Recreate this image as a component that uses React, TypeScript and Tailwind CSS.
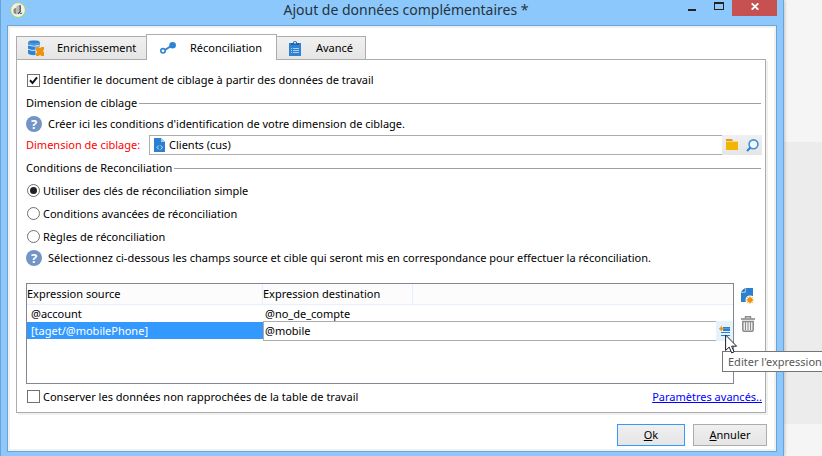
import { useState, type ReactNode } from "react";

function EnrichIcon() {
  return (
    <svg width="16" height="16" viewBox="0 0 16 16" aria-hidden="true">
      <path d="M0 2.200v11C1.500 15 5 15.400 8 15V8h4V2.200z" fill="#2f83d2" />
      <path d="M0 5q6 2.500 12 0M0 9.200q4 2 8 1" stroke="#e4eef8" strokeWidth=".9" fill="none" />
      <ellipse cx="6" cy="2.200" rx="6" ry="2" fill="#2f83d2" stroke="#a9cdee" strokeWidth=".5" />
      <path d="M7.500 6.500h9v9.500h-9z" fill="#ececec" />
      <path d="M8 7h2.500l1.500 1 1.500-1H16v2.500l-1 1.500 1 1.500V16h-2.500L12 15l-1.500 1H8v-2.500l1.200-1.500L8 10.500z" fill="#ee930f" />
    </svg>
  );
}

function LinkIcon() {
  return (
    <svg width="16" height="16" viewBox="0 0 16 16" aria-hidden="true">
      <path d="M5 10L11 6" stroke="#2f83d2" strokeWidth="2" />
      <circle cx="3" cy="10.800" r="2.200" fill="#fff" stroke="#2f83d2" strokeWidth="1.600" />
      <circle cx="12.600" cy="5.200" r="3.300" fill="#2f83d2" />
    </svg>
  );
}

function ClipboardIcon() {
  return (
    <svg width="12" height="16" viewBox="0 0 12 16" aria-hidden="true">
      <path d="M0 3h12v13H0z" fill="#2f83d2" />
      <path d="M2 5V3h2a2 2 0 0 1 4 0h2v2z" fill="#1f62a8" />
      <circle cx="6" cy="2.800" r="1" fill="#d9e9f8" />
      <path d="M2 8.500h1M4 8.500h6M2 10.500h1M4 10.500h6M2 12.500h1M4 12.500h6" stroke="#a6cff2" />
    </svg>
  );
}

function HelpIcon() {
  return (
    <span className="flex size-4 shrink-0 items-center justify-center rounded-full bg-[#7395c6] text-[13px] leading-4 font-bold text-white">
      ?
    </span>
  );
}

function SchemaIcon() {
  return (
    <svg className="shrink-0" width="11" height="14" viewBox="0 0 11 14" aria-hidden="true">
      <path d="M0 0h7l4 4v10H0z" fill="#2c80d0" />
      <path d="M7 0v4h4z" fill="#a5cbed" />
      <path d="M4.800 7.500L3 9.500l1.800 2M6.700 7.500l1.800 2-1.800 2" stroke="#d5e6f6" fill="none" />
    </svg>
  );
}

function FolderIcon() {
  return (
    <svg width="12" height="12" viewBox="0 0 12 12" aria-hidden="true">
      <path d="M0 0h6l1 2h5v2H0z" fill="#e29a1e" />
      <path d="M0 2h12v1H0z" fill="#f9d48a" />
      <path d="M0 3h12v8H0z" fill="#efb700" />
    </svg>
  );
}

function SearchIcon() {
  return (
    <svg width="13" height="13" viewBox="0 0 13 13" aria-hidden="true">
      <circle cx="7.500" cy="5.300" r="4.400" fill="#f3f8fd" stroke="#3f8fd8" strokeWidth="1.600" />
      <path d="M4.500 8.500L1 12" stroke="#2f83d2" strokeWidth="2.200" />
    </svg>
  );
}

function AddIcon() {
  return (
    <svg width="14" height="16" viewBox="0 0 14 16" aria-hidden="true">
      <path d="M4.500 0H12v8H7v6H0V4.500h4.500z" fill="#2c80d0" />
      <path d="M0 3.800L3.800 0v3.800z" fill="#1f62a8" />
      <circle cx="9" cy="12" r="4.500" fill="#fff" />
      <path d="M9 8v8M5 12h8M6.200 9.200l5.600 5.600M11.800 9.200l-5.600 5.600" stroke="#f2b04c" strokeWidth="1" />
      <circle cx="9" cy="12" r="2.700" fill="#ee930f" />
    </svg>
  );
}

function TrashIcon() {
  return (
    <svg width="14" height="16" viewBox="0 0 14 16" aria-hidden="true">
      <path d="M4.500 2.500V.8h5v1.700" stroke="#8a8a8a" strokeWidth="1.400" fill="none" />
      <path d="M0 3h14" stroke="#8a8a8a" strokeWidth="1.600" />
      <path d="M1.800 5.500h10.400v8.300q0 1.500-1.500 1.500H3.300q-1.500 0-1.500-1.500z" fill="#eee" stroke="#8a8a8a" strokeWidth="1.500" />
      <path d="M4.500 6v8M7 6v8M9.500 6v8" stroke="#8a8a8a" />
    </svg>
  );
}

function EditExpressionIcon() {
  return (
    <svg width="11" height="11" viewBox="0 0 11 11" aria-hidden="true">
      <path d="M4 1h7v4H4z" fill="#2c80d0" />
      <path d="M2 6.500h9M2 9.500h9" stroke="#2c80d0" strokeWidth="1.200" />
      <path d="M4 2.500h7" stroke="#7fb4e4" strokeWidth=".5" />
      <path d="M2.300 .3l.8 1.600 1.600.8-1.600.8-.8 1.600-.8-1.600L0 2.700l1.500-.8z" fill="#ee930f" stroke="#ee930f" strokeWidth=".6" />
    </svg>
  );
}

function Pointer() {
  return (
    <svg width="13" height="20" viewBox="0 0 13 20" aria-hidden="true">
      <path d="M.6 1v15.500l3.600-3.400 2.500 5.800 2.400-1-2.500-5.700h5z" fill="#fff" stroke="#1c1c2c" />
    </svg>
  );
}

function AppIcon() {
  return (
    <svg className="shrink-0" width="16" height="16" viewBox="0 0 16 16" aria-hidden="true">
      <circle cx="8" cy="8" r="7.400" fill="#f1f3ea" stroke="#a6cf6c" />
      <path d="M3.500 7l3-1.500v7L3.500 11z" fill="#8b8b86" />
      <path d="M6.500 4l3.500-1.200V10l-3.500 2.500z" fill="#b9bbb4" />
      <path d="M10.200 3.200v6.600l-2.200 2" stroke="#333" strokeWidth="1.100" fill="none" />
      <path d="M10 11.800l2.200-.8" stroke="#555" />
    </svg>
  );
}

function TitleBar() {
  return (
    <header className="grid h-[25px] grid-cols-[127px_1fr_99px] items-start">
      <div className="pt-0.5 pl-[3px]">
        <AppIcon />
      </div>
      <h1 className="text-center text-[14px] leading-5 text-[#27333d]">Ajout de données complémentaires *</h1>
      <div className="flex">
        <button aria-label="Réduire" className="flex h-4 w-[27px] items-center justify-center pt-1">
          <svg width="8" height="2"><path d="M0 0h8v2H0z" fill="#222" /></svg>
        </button>
        <button aria-label="Agrandir" className="flex h-4 w-[27px] items-start justify-center pt-0.5">
          <svg width="10" height="8"><path d="M0 0h10v8H0zM1 2v5h8V2z" fill="#222" fillRule="evenodd" /></svg>
        </button>
        <button aria-label="Fermer" className="flex h-4 w-[45px] items-start justify-center bg-[#c75050] pt-[3px]">
          <svg width="8" height="7"><path d="M.7.3l6.600 6.400M7.300.3L.7 6.700" stroke="#fff" strokeWidth="1.800" /></svg>
        </button>
      </div>
    </header>
  );
}

function Tabs() {
  const idle = "flex h-[23px] items-center border-t border-[#acacac] bg-linear-to-b from-[#f0f0f0] to-[#e5e5e5]";
  return (
    <div role="tablist" className="flex items-end">
      <button role="tab" aria-selected="false" className={`${idle} w-[130px] gap-[13px] border-l pl-[11px]`}>
        <EnrichIcon />
        Enrichissement
      </button>
      <button
        role="tab"
        aria-selected="true"
        className="z-10 -mb-px flex h-[26px] w-[131px] items-center gap-3.5 border-x border-t border-[#acacac] bg-white pl-[13px]"
      >
        <LinkIcon />
        Réconciliation
      </button>
      <button role="tab" aria-selected="false" className={`${idle} w-[89px] gap-[15px] border-r pl-3`}>
        <ClipboardIcon />
        Avancé
      </button>
    </div>
  );
}

function SectionTitle({ className, children }: { className: string; children: ReactNode }) {
  return (
    <h2 className={`flex items-center gap-0.5 ${className}`}>
      {children}
      <span className="mr-px h-px flex-1 bg-[#a0a0a0]" />
    </h2>
  );
}

function Check({ checked, onChange, children }: { checked: boolean; onChange: () => void; children: ReactNode }) {
  return (
    <label className="flex items-center gap-[3px]">
      <span className="relative ml-px flex size-[13px]">
        <input type="checkbox" checked={checked} onChange={onChange} className="size-[13px] appearance-none border border-[#707070] bg-white" />
        {checked && (
          <svg className="pointer-events-none absolute inset-0" width="13" height="13" viewBox="0 0 13 13" aria-hidden="true">
            <path d="M3 6.300l2.500 2.700L10 3.300" stroke="#111" strokeWidth="2" fill="none" />
          </svg>
        )}
      </span>
      {children}
    </label>
  );
}

const modes = [
  "Utiliser des clés de réconciliation simple",
  "Conditions avancées de réconciliation",
  "Règles de réconciliation",
];

function MappingTable() {
  return (
    <div className="h-[101px] min-w-0 flex-1 border border-[#828790]">
      <table className="w-full table-fixed border-separate border-spacing-0 text-left">
        <colgroup>
          <col className="w-[236px]" />
          <col className="w-[150px]" />
          <col />
        </colgroup>
        <thead>
          <tr className="h-[21px] bg-[#fcfcfc]">
            <th className="border-r border-b border-[#e5efff] p-0 font-normal">Expression source</th>
            <th className="border-r border-b border-[#e5efff] p-0 font-normal">Expression destination</th>
            <th className="border-b border-[#e5efff] p-0" />
          </tr>
        </thead>
        <tbody>
          <tr className="h-[17px]">
            <td className="p-0 pl-1">@account</td>
            <td className="p-0 pl-0.5" colSpan={2}>@no_de_compte</td>
          </tr>
          <tr className="h-[17px]">
            <td className="bg-[#3399ff] p-0 pl-1 text-white">[taget/@mobilePhone]</td>
            <td className="relative p-0" colSpan={2}>
              <div className="absolute -top-px left-0 flex h-5 w-full">
                <input
                  aria-label="Expression destination"
                  defaultValue="@mobile"
                  className="min-w-0 flex-1 border border-r-0 border-[#acacac] bg-white pl-px outline-none"
                />
                <button aria-label="Editer l'expression" className="relative flex w-[17px] items-center justify-center bg-[#e5f1fb]">
                  <EditExpressionIcon />
                  <span className="absolute top-[13px] left-[9px] z-20">
                    <Pointer />
                  </span>
                </button>
                <div
                  role="tooltip"
                  className="absolute top-[30px] left-full z-10 -ml-[11px] border border-[#767676] bg-white pl-[5px] leading-[19px] whitespace-nowrap text-[#575757]"
                >
                  Editer l'expression
                </div>
              </div>
            </td>
          </tr>
        </tbody>
      </table>
    </div>
  );
}

function ReconciliationPanel() {
  const [identify, setIdentify] = useState(true);
  const [keep, setKeep] = useState(false);
  const [mode, setMode] = useState(0);
  return (
    <section className="border border-[#acacac] bg-white pt-2 pr-[3px] pb-[3px] pl-[9px] shadow-[2px_2px_0_#f0f0f0]">
      <div className="flex h-6 items-center">
        <Check checked={identify} onChange={() => setIdentify(!identify)}>
          Identifier le document de ciblage à partir des données de travail
        </Check>
      </div>
      <SectionTitle className="h-[22px]">Dimension de ciblage</SectionTitle>
      <p className="flex h-5 items-center gap-1.5">
        <HelpIcon />
        Créer ici les conditions d'identification de votre dimension de ciblage.
      </p>
      <div className="mt-px flex h-5 items-center">
        <label htmlFor="dimension" className="w-[123px] text-[#ff0000]">Dimension de ciblage:</label>
        <div className="flex h-5 flex-1 items-center border border-r-0 border-[#acacac] pl-1">
          <SchemaIcon />
          <input id="dimension" defaultValue="Clients (cus)" className="min-w-0 flex-1 pl-1 outline-none" />
        </div>
        <div className="flex h-5 w-10 bg-linear-to-b from-[#f0f0f0] to-[#e5e5e5]">
          <button aria-label="Ouvrir" className="flex flex-1 items-center justify-center"><FolderIcon /></button>
          <button aria-label="Rechercher" className="flex flex-1 items-center justify-center"><SearchIcon /></button>
        </div>
      </div>
      <SectionTitle className="h-[26px]">Conditions de Reconciliation</SectionTitle>
      <fieldset className="flex flex-col gap-1">
        {modes.map((name, i) => (
          <label key={name} className="flex h-[19px] items-center gap-[3px]">
            <span className="relative ml-px flex size-[13px] items-center justify-center">
              <input
                type="radio"
                name="mode"
                checked={mode === i}
                onChange={() => setMode(i)}
                className="size-[13px] appearance-none rounded-full border border-[#707070] bg-white"
              />
              {mode === i && <span className="pointer-events-none absolute inset-[3px] rounded-full bg-[#212121]" />}
            </span>
            {name}
          </label>
        ))}
      </fieldset>
      <p className="mt-0.5 flex h-5 items-center gap-1.5">
        <HelpIcon />
        Sélectionnez ci-dessous les champs source et cible qui seront mis en correspondance pour effectuer la réconciliation.
      </p>
      <div className="mt-[15px] flex">
        <MappingTable />
        <div className="flex w-7 flex-col items-center gap-3 pt-[5px]">
          <button aria-label="Ajouter"><AddIcon /></button>
          <button aria-label="Supprimer"><TrashIcon /></button>
        </div>
      </div>
      <div className="flex h-[25px] items-center justify-between">
        <Check checked={keep} onChange={() => setKeep(!keep)}>
          Conserver les données non rapprochées de la table de travail
        </Check>
        <a href="#avances" className="text-[#0000ff] underline">Paramètres avancés..</a>
      </div>
    </section>
  );
}

export default function App() {
  return (
    <div className="flex min-h-screen overflow-hidden bg-[#f5f5f5] font-['Noto_Sans',sans-serif] text-[11px] leading-4 text-black">
      <main className="relative z-10 min-w-0 flex-1 border-x border-[#6ba3d6] bg-[#8cc8fb] px-1.5 pb-1 shadow-[1px_0_3px_#00000033]">
        <TitleBar />
        <div className="border border-[#6ba3d6] bg-white">
          <div className="border-2 border-[#f0f0f0] px-1.5 pt-1.5 pb-[3px]">
            <div className="mr-0.5">
              <Tabs />
              <ReconciliationPanel />
            </div>
            <div className="mt-[11px] mr-px flex justify-end gap-2">
              <button className="h-[22px] w-[68px] border border-[#3399ff] bg-linear-to-b from-[#f0f0f0] to-[#e5e5e5]">
                <u>O</u>k
              </button>
              <button className="h-[22px] w-[74px] border border-[#acacac] bg-linear-to-b from-[#f0f0f0] to-[#e5e5e5]">
                <u>A</u>nnuler
              </button>
            </div>
          </div>
        </div>
      </main>
      <div className="flex w-[38px] flex-col pt-[142px]">
        <div className="h-[282px] bg-[#ececec]" />
      </div>
    </div>
  );
}
